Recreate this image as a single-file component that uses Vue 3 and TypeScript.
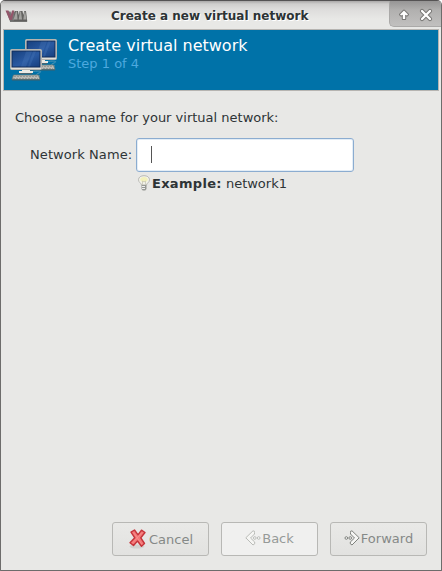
<script setup lang="ts">
import { ref } from 'vue'

const step = ref<number>(1)
const totalSteps = 4
const windowTitle = 'Create a new virtual network'
</script>

<template>
  <div class="window">
    <header class="titlebar">
      <svg class="app-icon" width="24" height="14" viewBox="0 0 24 14">
        <path d="M1.500 2.500h4l1.400 4L8 2.500h3L8 12.500H5z" fill="#777" />
        <path d="M.5 1.500h3l2 5.500L7 1.500h2.300L7 11H4.500z" fill="#92566a" />
        <path d="M10 2h3l.8 4 .8-4h2.900l.8 4 .9-4h1.800l1 8 .3 2.500H8z" fill="#646361" />
        <path d="M8.500 10.500 11 2.500h1l.5 8zM13.700 10.500l1.300-8h1l1 8zM18.300 10.500l1.200-8h.8l1.200 8z" fill="#a3a29f" />
        <path d="M5 12.200h17" stroke="#5c5c5a" />
      </svg>
      <h1>{{ windowTitle }}</h1>
      <div class="controls">
        <svg width="14" height="14" viewBox="0 0 14 14">
          <path d="M7 2.500 11 6.500 10 7.500 8.200 6.800V11H5.800V6.800L4 7.500 3 6.500z" stroke="#777674" stroke-width="2" stroke-linejoin="round" fill="#fff" />
          <path d="M7 2.500 11 6.500 10 7.500 8.200 6.800V11H5.800V6.800L4 7.500 3 6.500z" fill="#fff" />
        </svg>
        <svg width="14" height="14" viewBox="0 0 14 14">
          <path d="m3 3 8 8M11 3l-8 8" stroke="#777674" stroke-width="4.200" stroke-linecap="round" />
          <path d="m3 3 8 8M11 3l-8 8" stroke="#fff" stroke-width="2.300" stroke-linecap="round" />
        </svg>
      </div>
    </header>

    <section class="banner">
      <svg class="computers" width="48" height="44" viewBox="0 0 48 44">
        <defs>
          <linearGradient id="screen" x1="0" y1="0" x2="1" y2="1">
            <stop offset="0" stop-color="#18417f" />
            <stop offset=".55" stop-color="#2a5aa2" />
            <stop offset="1" stop-color="#174080" />
          </linearGradient>
          <g id="computer">
            <path d="M22 22.500c8-1 11 0 7 1.500s-3 2 1 3" fill="none" stroke="#4f96b8" />
            <path d="M12 20h8v2h3v2H9v-2h3z" fill="#e9e9e4" />
            <path d="M10 24.500h12" stroke="#4a6470" />
            <rect x=".5" y=".5" width="31" height="20" rx="1" fill="#e0e0db" stroke="#b5b4af" />
            <rect x="1.500" y="1.500" width="29" height="17" fill="#102b58" />
            <rect x="2.500" y="2.500" width="27" height="15" fill="url(#screen)" />
            <path d="M16 2.500h6l-6 15h-5zM23 2.500h3l-6 15h-2z" fill="#5e8bc8" opacity=".2" />
            <path d="M3.500 26h25l1.500 4.500H2z" fill="#b9bbb7" stroke="#6a7774" stroke-width=".8" />
            <path d="M4 27.500h23M3 29.500h25" stroke="#979995" stroke-dasharray="2 1" />
            <path d="M2 31h28" stroke="#415e6a" />
          </g>
        </defs>
        <use href="#computer" x="15" y="0" />
        <use href="#computer" x="0" y="10" />
      </svg>
      <div class="heading">
        <h2>Create virtual network</h2>
        <p>Step {{ step }} of {{ totalSteps }}</p>
      </div>
    </section>

    <main>
      <p class="prompt">Choose a name for your virtual network:</p>
      <div class="field">
        <label for="name">Network Name:</label>
        <div id="name" class="entry" role="textbox"><span class="caret"></span></div>
      </div>
      <div class="hint">
        <svg width="14" height="16" viewBox="0 0 14 16">
          <path d="M4.500 10C4.300 8 1.500 7.500 1.500 4.800 1.500 2 4 .700 7 .7s5.500 1.300 5.500 4.100c0 2.700-2.800 3.200-3 5.200z" fill="#f3f3ec" stroke="#b9b9b4" />
          <ellipse cx="7" cy="4.500" rx="3.700" ry="2.500" fill="#f3f1bc" />
          <path d="M5.500 10V6l1.500 1 1.500-1v4" fill="none" stroke="#c9c8b5" stroke-width=".8" />
          <path d="M4.500 10h5v4l-1.200 1.500H5.700L4.500 14z" fill="#969894" />
          <path d="M5 11.500h3M5 13.500h3" stroke="#eee" />
        </svg>
        <p><b>Example:</b> network1</p>
      </div>
    </main>

    <footer>
      <button class="cancel">
        <svg width="20" height="20" viewBox="0 0 20 20">
          <ellipse cx="9" cy="17.500" rx="7.500" ry="2" fill="#d2d2cf" />
          <path d="M3 3.200 6.500 1 10 5.800 13.500 1.200 17 3.500 12.800 8.800 16.500 14.500 13.500 17.200 9.500 12 5.500 16.500 2 13.800 6.800 8.800z" fill="#f27777" stroke="#c5343a" stroke-width="1.400" stroke-linejoin="round" />
          <path d="m5.500 3.500 8.500 12M14 3.500 4.500 14" stroke="#ff9d99" stroke-width="1" opacity=".5" />
        </svg>
        <span>Cancel</span>
      </button>
      <button class="back" disabled>
        <svg width="16" height="16" viewBox="0 0 16 16">
          <path d="M9.500 2.500V1.300L8 .800.800 7.800 8 15l1.700-1.200V12L5.500 8l4-4z" fill="#f6f6f4" stroke="#b9bbb7" stroke-linejoin="round" />
          <circle cx="9.800" cy="8" r="1.300" fill="#fff" stroke="#b9bbb7" />
          <circle cx="13.700" cy="8" r="1.300" fill="#fff" stroke="#b9bbb7" />
        </svg>
        <span>Back</span>
      </button>
      <button class="forward">
        <svg width="16" height="16" viewBox="0 0 16 16">
          <path d="M6.500 2.500V1.300L8 .800 15.200 7.800 8 15l-1.700-1.200V12l4.200-4-4-4z" fill="#f6f6f4" stroke="#7d807b" stroke-linejoin="round" />
          <circle cx="6.200" cy="8" r="1.300" fill="#fff" stroke="#7d807b" />
          <circle cx="2.300" cy="8" r="1.300" fill="#fff" stroke="#7d807b" />
        </svg>
        <span>Forward</span>
      </button>
    </footer>
  </div>
</template>

<style>
body { background: #fff; overflow: hidden; }
</style>

<style scoped>
* { box-sizing: border-box; }
h1, h2, p { margin: 0; }
svg { display: block; flex: none; fill: none; }
.window {
  width: 442px;
  height: 571px;
  display: flex;
  flex-direction: column;
  border: 1px solid #6d6c6b;
  border-top-color: #555354;
  border-radius: 5px 5px 1px 1px;
  background: #e8e8e6;
  color: #2e3436;
  font: 13px/16px "DejaVu Sans", sans-serif;
  overflow: hidden;
}
.titlebar {
  height: 28px;
  flex: none;
  display: flex;
  align-items: flex-start;
  background: linear-gradient(#aaa8a8, #cfcecd 3px, #dddcdb 8px, #e8e8e6 18px);
}
.app-icon { margin: 8px 0 0 4px; }
h1 {
  flex: 1;
  margin: 8px 0 0 82px;
  font-size: 12px;
  line-height: 15px;
  color: #2d3335;
  text-shadow: 1px 1px #fff;
  white-space: nowrap;
}
.controls {
  width: 52px;
  height: 26px;
  display: flex;
  gap: 8px;
  padding: 7px 0 0 7px;
  border: solid #aaa9a8;
  border-width: 0 0 1px 1px;
  border-radius: 0 0 0 5px;
  background: linear-gradient(#969595, #b1b0af 9px, #c1c0bf);
}
.banner {
  height: 62px;
  flex: none;
  margin: 0 2px;
  display: flex;
  border: 1px solid #b6b4b1;
  background: #0072a8;
}
.computers { margin: 9px 0 0 6px; }
.heading { margin: 6px 0 0 10px; }
h2 { font-size: 16px; line-height: 19px; font-weight: 400; color: #fff; }
.heading p { line-height: 16px; color: #4da9df; margin-top: 1px; }
main { flex: 1; padding: 19px 14px 0; }
.field { display: flex; align-items: center; margin: 12px 0 0 15px; }
.field label { width: 106px; white-space: nowrap; letter-spacing: .08px; }
.entry {
  width: 218px;
  height: 34px;
  padding: 7px 14px;
  border: 1px solid #8bacd0;
  border-radius: 3px;
  background: #fff;
  box-shadow: inset 0 0 0 1px #e3edf6;
}
.caret { display: block; width: 1px; height: 17px; background: #555; }
.hint { display: flex; align-items: flex-start; margin: 3px 0 0 122px; }
.hint p { padding: 1px 0 0 1px; white-space: nowrap; }
.hint b { letter-spacing: .3px; }
footer { flex: none; display: flex; gap: 12px; padding: 0 0 14px 111px; }
button {
  width: 97px;
  height: 34px;
  display: flex;
  align-items: center;
  justify-content: center;
  gap: 1px;
  padding: 0;
  border: 1px solid #b8b8b5;
  border-radius: 3px;
  background: linear-gradient(#e9e9e7, #e2e2e0);
  color: #858987;
  font: inherit;
}
button span { line-height: 16px; }
.cancel span { padding-top: 2px; }
.back { background: #f0f0ef; color: #969a98; }
.back svg, .forward svg { margin-top: -3px; }
</style>
